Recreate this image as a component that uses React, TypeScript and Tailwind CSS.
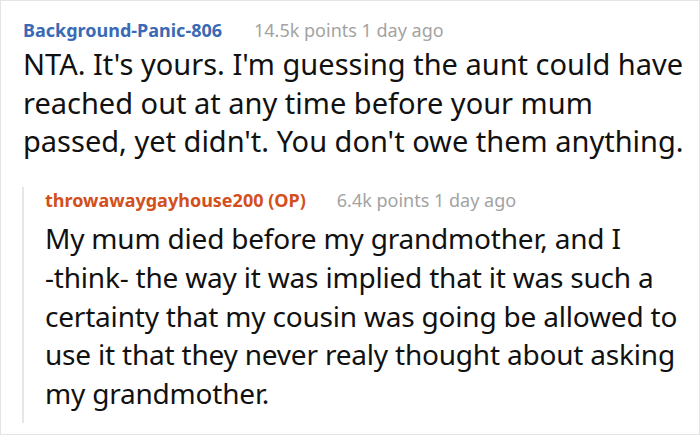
const replyLines = [
  'My mum died before my grandmother, and I',
  '-think- the way it was implied that it was such a',
  'certainty that my cousin was going be allowed to',
  'use it that they never realy thought about asking',
  'my grandmother.',
]

export default function App() {
  return (
    <div className="h-[436px] w-[700px] bg-white" style={{ fontFamily: '"Noto Sans", sans-serif' }}>
      <div className="h-[435px] w-[700px] border border-[#e4e4e4] pl-[22px] pr-[4px] pt-[16px]">
        <div className="flex items-baseline text-[18px] leading-[26px]">
          <span className="font-bold text-[#3a6ab4]">Background-Panic-806</span>
          <span className="ml-[32px] text-[#a3a3a3]">14.5k points 1 day ago</span>
        </div>
        <p className="mt-[2px] text-[29px] leading-[38.7px] text-[#111]">
          NTA. It's yours. I'm guessing the aunt could have reached out at any time before your mum passed, yet didn't. You don't owe them anything.
        </p>
        <div className="mt-[38px] ml-[-1px] border-l-2 border-[#e6e6e6] pb-[10px] pl-[21px]">
          <div className="-mt-[12px] flex items-baseline text-[18px] leading-[26px]">
            <span className="font-bold text-[#d34f1c]">throwawaygayhouse200 (OP)</span>
            <span className="ml-[31px] text-[#a3a3a3]">6.4k points 1 day ago</span>
          </div>
          <p className="mt-[6px] text-[28px] leading-[38.7px] tracking-[-0.2px] text-[#111]">
            {replyLines.map((l, i) => (
              <span key={i} className="block whitespace-nowrap">{l}</span>
            ))}
          </p>
        </div>
      </div>
    </div>
  );
}
